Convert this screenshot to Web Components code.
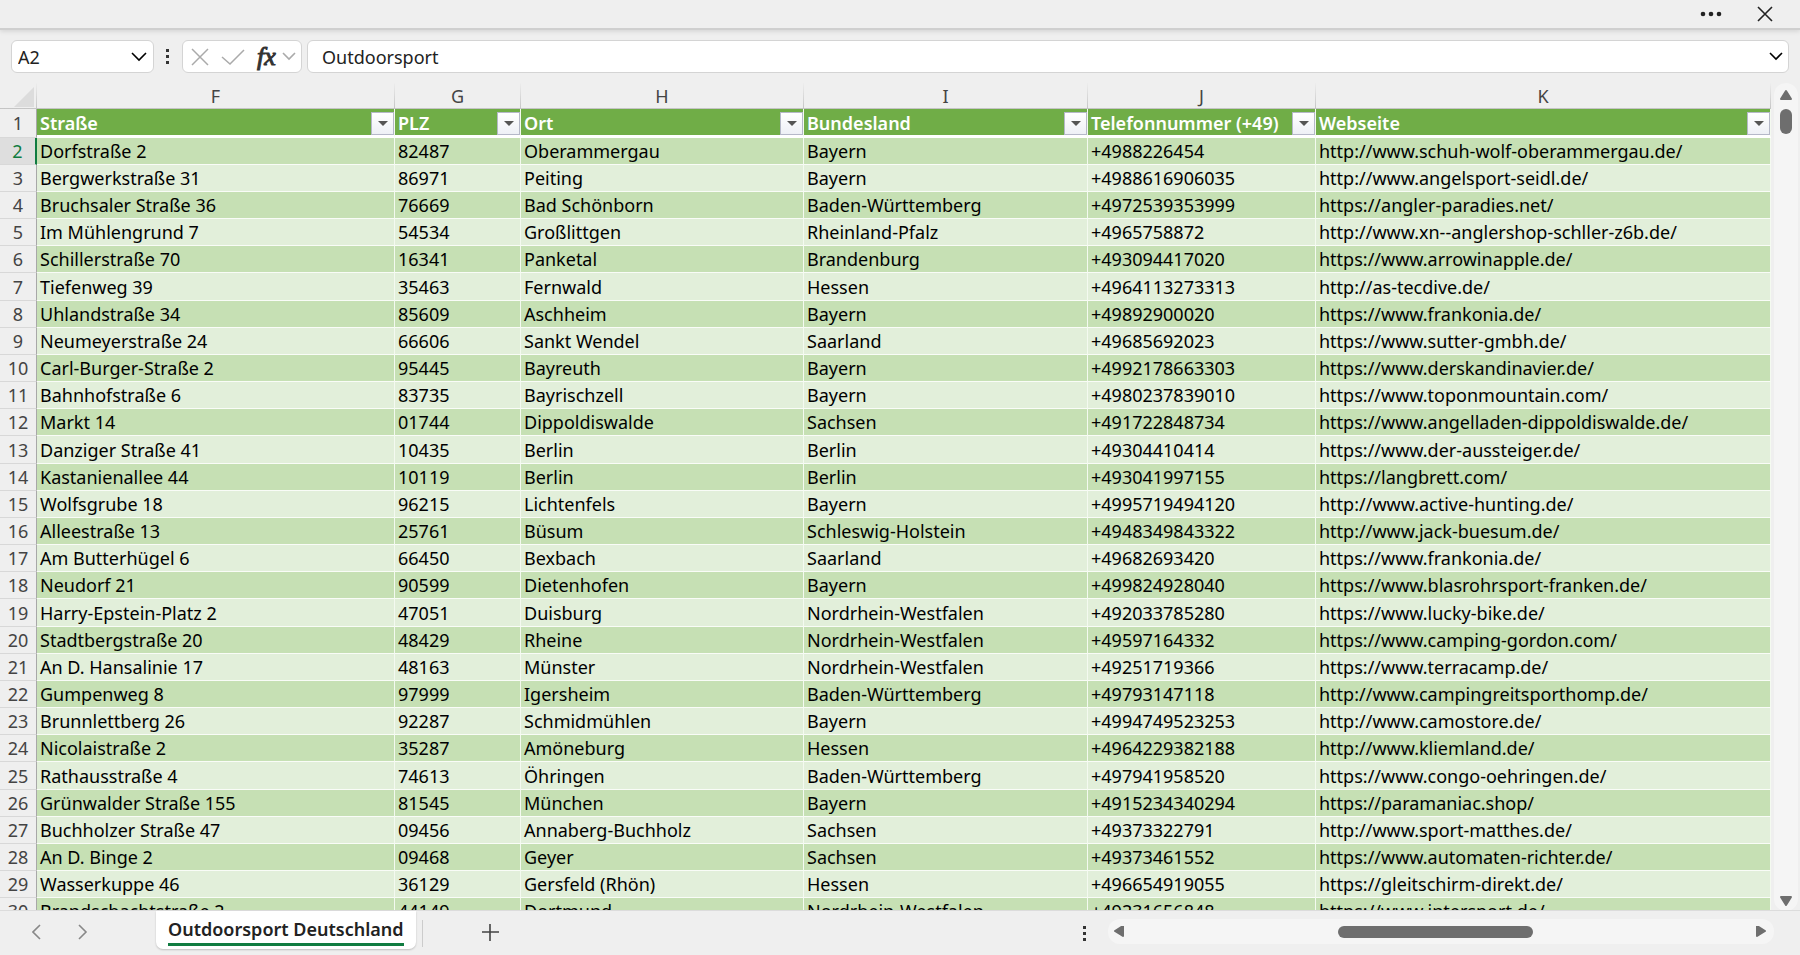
<!DOCTYPE html>
<html lang="de">
<head>
<meta charset="utf-8">
<title>Outdoorsport Deutschland</title>
<style>
  html, body {
    height: 100%;
    margin: 0;
  }
  body {
    background: #efefef;
    color: #000;
    font-family: "Noto Sans", "Open Sans", sans-serif;
    font-size: 18px;
    overflow: hidden;
  }
</style>
</head>
<body>
<sheet-app></sheet-app>

<script>
const columns = [
  ['F', 'Straße'], ['G', 'PLZ'], ['H', 'Ort'],
  ['I', 'Bundesland'], ['J', 'Telefonnummer (+49)'], ['K', 'Webseite']
];

const rows = [
  ['Dorfstraße 2', '82487', 'Oberammergau', 'Bayern', '+4988226454', 'http://www.schuh-wolf-oberammergau.de/'],
  ['Bergwerkstraße 31', '86971', 'Peiting', 'Bayern', '+4988616906035', 'http://www.angelsport-seidl.de/'],
  ['Bruchsaler Straße 36', '76669', 'Bad Schönborn', 'Baden-Württemberg', '+4972539353999', 'https://angler-paradies.net/'],
  ['Im Mühlengrund 7', '54534', 'Großlittgen', 'Rheinland-Pfalz', '+4965758872', 'http://www.xn--anglershop-schller-z6b.de/'],
  ['Schillerstraße 70', '16341', 'Panketal', 'Brandenburg', '+493094417020', 'https://www.arrowinapple.de/'],
  ['Tiefenweg 39', '35463', 'Fernwald', 'Hessen', '+4964113273313', 'http://as-tecdive.de/'],
  ['Uhlandstraße 34', '85609', 'Aschheim', 'Bayern', '+49892900020', 'https://www.frankonia.de/'],
  ['Neumeyerstraße 24', '66606', 'Sankt Wendel', 'Saarland', '+49685692023', 'https://www.sutter-gmbh.de/'],
  ['Carl-Burger-Straße 2', '95445', 'Bayreuth', 'Bayern', '+4992178663303', 'https://www.derskandinavier.de/'],
  ['Bahnhofstraße 6', '83735', 'Bayrischzell', 'Bayern', '+4980237839010', 'https://www.toponmountain.com/'],
  ['Markt 14', '01744', 'Dippoldiswalde', 'Sachsen', '+491722848734', 'https://www.angelladen-dippoldiswalde.de/'],
  ['Danziger Straße 41', '10435', 'Berlin', 'Berlin', '+49304410414', 'https://www.der-aussteiger.de/'],
  ['Kastanienallee 44', '10119', 'Berlin', 'Berlin', '+493041997155', 'https://langbrett.com/'],
  ['Wolfsgrube 18', '96215', 'Lichtenfels', 'Bayern', '+4995719494120', 'http://www.active-hunting.de/'],
  ['Alleestraße 13', '25761', 'Büsum', 'Schleswig-Holstein', '+4948349843322', 'http://www.jack-buesum.de/'],
  ['Am Butterhügel 6', '66450', 'Bexbach', 'Saarland', '+49682693420', 'https://www.frankonia.de/'],
  ['Neudorf 21', '90599', 'Dietenhofen', 'Bayern', '+499824928040', 'https://www.blasrohrsport-franken.de/'],
  ['Harry-Epstein-Platz 2', '47051', 'Duisburg', 'Nordrhein-Westfalen', '+492033785280', 'https://www.lucky-bike.de/'],
  ['Stadtbergstraße 20', '48429', 'Rheine', 'Nordrhein-Westfalen', '+49597164332', 'https://www.camping-gordon.com/'],
  ['An D. Hansalinie 17', '48163', 'Münster', 'Nordrhein-Westfalen', '+49251719366', 'https://www.terracamp.de/'],
  ['Gumpenweg 8', '97999', 'Igersheim', 'Baden-Württemberg', '+49793147118', 'http://www.campingreitsporthomp.de/'],
  ['Brunnlettberg 26', '92287', 'Schmidmühlen', 'Bayern', '+4994749523253', 'http://www.camostore.de/'],
  ['Nicolaistraße 2', '35287', 'Amöneburg', 'Hessen', '+4964229382188', 'http://www.kliemland.de/'],
  ['Rathausstraße 4', '74613', 'Öhringen', 'Baden-Württemberg', '+497941958520', 'https://www.congo-oehringen.de/'],
  ['Grünwalder Straße 155', '81545', 'München', 'Bayern', '+4915234340294', 'https://paramaniac.shop/'],
  ['Buchholzer Straße 47', '09456', 'Annaberg-Buchholz', 'Sachsen', '+49373322791', 'http://www.sport-matthes.de/'],
  ['An D. Binge 2', '09468', 'Geyer', 'Sachsen', '+49373461552', 'https://www.automaten-richter.de/'],
  ['Wasserkuppe 46', '36129', 'Gersfeld (Rhön)', 'Hessen', '+496654919055', 'https://gleitschirm-direkt.de/'],
  ['Brandschachtstraße 2', '44149', 'Dortmund', 'Nordrhein-Westfalen', '+49231656848', 'https://www.intersport.de/']
];

const buttonReset = `
  button {
    display: flex;
    align-items: center;
    justify-content: center;
    padding: 0;
    border: 0;
    background: none;
    color: inherit;
  }
  svg { display: block; fill: none; stroke: currentColor; }
`;

customElements.define('title-strip', class extends HTMLElement {
  constructor() {
    super();
    this.attachShadow({ mode: 'open' }).innerHTML = `
      <style>
        ${buttonReset}
        :host {
          display: flex;
          justify-content: flex-end;
          gap: 22px;
          height: 28px;
          padding-right: 19px;
          border-bottom: 2px solid #cfcfcf;
          box-shadow: 0 1px 5px #0002;
          color: #222;
        }
        button { width: 32px; height: 28px; }
      </style>
      <button aria-label="Weitere Optionen">
        <svg width="24" height="6"><g fill="currentColor" stroke="none"><circle cx="4" cy="3" r="2.3"/><circle cx="12" cy="3" r="2.3"/><circle cx="20" cy="3" r="2.3"/></g></svg>
      </button>
      <button aria-label="Schließen">
        <svg width="16" height="16" stroke-width="1.6"><path d="M1 1l14 14M15 1L1 15"/></svg>
      </button>
    `;
  }
});

customElements.define('formula-bar', class extends HTMLElement {
  constructor() {
    super();
    this.attachShadow({ mode: 'open' }).innerHTML = `
      <style>
        ${buttonReset}
        :host {
          display: flex;
          align-items: center;
          gap: 5px;
          padding: 10px 11px;
        }
        .box {
          display: flex;
          align-items: center;
          box-sizing: border-box;
          height: 33px;
          border: 1px solid #d4d4d4;
          border-radius: 6px;
          background: #fff;
        }
        .name { width: 143px; padding: 0 6px; }
        .tools { width: 120px; gap: 12px; padding: 0 2px 0 8px; color: #aaa; }
        .tools .fx {
          margin-right: -6px;
          color: #333;
          font: italic 26px/28px "Liberation Serif", serif;
          -webkit-text-stroke: 1px #333;
        }
        .formula { flex: 1; padding: 0 5px 0 14px; }
        .grip { width: 18px; }
        input {
          flex: 1;
          min-width: 0;
          padding: 0;
          border: 0;
          outline: 0;
          background: none;
          color: #222;
          font: inherit;
        }
      </style>
      <div class="box name">
        <input aria-label="Namenfeld" value="A2">
        <button aria-label="Namen anzeigen"><svg width="16" height="10" stroke="#333" stroke-width="1.6"><path d="M1 1l7 7 7-7"/></svg></button>
      </div>
      <svg class="grip" height="16" viewBox="0 0 4 16"><path d="M0 0h3v3H0zM0 6h3v3H0zM0 12h3v3H0z" fill="#333" stroke="none"/></svg>
      <div class="box tools">
        <button aria-label="Abbrechen"><svg width="18" height="18" stroke-width="1.5"><path d="M1 1l16 16M17 1L1 17"/></svg></button>
        <button aria-label="Eingeben"><svg width="24" height="18" stroke-width="1.5"><path d="M1 9l8 7L23 2"/></svg></button>
        <button class="fx" aria-label="Funktion einfügen">fx</button>
        <button aria-label="Funktionen"><svg width="14" height="9" stroke-width="1.6"><path d="M1 1l6 6 6-6"/></svg></button>
      </div>
      <div class="box formula">
        <input aria-label="Bearbeitungsleiste" value="Outdoorsport">
        <button aria-label="Erweitern"><svg width="14" height="10" stroke="#333" stroke-width="1.6"><path d="M1 1l6 6 6-6"/></svg></button>
      </div>
    `;
  }
});

customElements.define('filter-head', class extends HTMLElement {
  constructor() {
    super();
    this.attachShadow({ mode: 'open' }).innerHTML = `
      <style>
        ${buttonReset}
        :host {
          display: flex;
          align-items: center;
          justify-content: space-between;
          box-sizing: border-box;
          height: 26px;
          padding-top: 2px;
          white-space: nowrap;
        }
        button {
          box-sizing: border-box;
          width: 23px;
          height: 23px;
          align-self: flex-end;
          border: 1px solid #b5b8c8;
          background: linear-gradient(#fff, #eef0f6);
        }
      </style>
      <slot></slot>
      <button aria-label="Filter"><svg width="10" height="5"><path d="M0 0h10L5 5z" fill="#555" stroke="none"/></svg></button>
    `;
  }
});

customElements.define('data-grid', class extends HTMLElement {
  constructor() {
    super();
    const letters = columns.map(c => `<th scope="col">${c[0]}</th>`).join('');
    const heads = columns.map(c => `<th scope="col"><filter-head>${c[1]}</filter-head></th>`).join('');
    const body = rows.map((row, i) =>
      `<tr><th scope="row">${i + 2}</th>${row.map(cell => `<td>${cell}</td>`).join('')}</tr>`
    ).join('');
    this.attachShadow({ mode: 'open' }).innerHTML = `
      <style>
        :host {
          display: block;
          overflow: hidden;
        }
        table {
          width: 100%;
          table-layout: fixed;
          border-collapse: separate;
          border-spacing: 0;
        }
        .num { width: 37px; }
        .f { width: 358px; }
        .g { width: 126px; }
        .h { width: 283px; }
        .i { width: 284px; }
        .j { width: 228px; }
        th, td {
          box-sizing: border-box;
          height: 27px;
          padding: 0;
          line-height: 24px;
          white-space: nowrap;
          overflow: hidden;
        }
        td {
          padding-left: 3px;
          border-right: 1px solid #f4faf0;
          border-bottom: 1px solid #f9fcf7;
          background: #e2efda;
          text-align: left;
        }
        tbody tr:nth-child(odd) td { background: #c6e0b4; }
        tbody tr:nth-child(6n) > * { height: 28px; }
        .letters th {
          height: 26px;
          border-right: 1px solid;
          border-bottom: 1px solid #b0b0b0;
          color: #444;
          font-weight: 400;
          border-image: linear-gradient(#efefef, #c4c4c4) 1;
        }
        .letters svg { display: block; margin: 3px 2px 0 auto; }
        .heads th[scope=col] {
          height: 29px;
          padding-left: 3px;
          border-right: 1px solid #f4faf0;
          border-bottom: 3px solid #fff;
          background: #70ad47;
          color: #fff;
          font-weight: 600;
          text-align: left;
        }
        th[scope=row] {
          border-right: 1px solid #a8a8a8;
          border-bottom: 1px solid #d8d8d8;
          background: #efefef;
          color: #444;
          font-weight: 400;
          text-align: center;
        }
        tbody tr:first-child th {
          border-right: 2px solid #107c41;
          background: #dedede;
          color: #107c41;
        }
      </style>
      <table>
        <colgroup><col class="num"><col class="f"><col class="g"><col class="h"><col class="i"><col class="j"><col></colgroup>
        <thead>
          <tr class="letters"><th><svg width="20" height="20"><path d="M20 0v20H0z" fill="#dcdcdc"/></svg></th>${letters}</tr>
          <tr class="heads"><th scope="row">1</th>${heads}</tr>
        </thead>
        <tbody>${body}</tbody>
      </table>
    `;
  }
});

customElements.define('scroll-rail', class extends HTMLElement {
  constructor() {
    super();
    this.attachShadow({ mode: 'open' }).innerHTML = `
      <style>
        ${buttonReset}
        :host {
          display: flex;
          flex-direction: column;
          align-items: center;
          box-sizing: border-box;
          border-radius: 12px;
          background: #f5f5f5;
          color: #6e6e6e;
        }
        :host([horizontal]) { flex-direction: row; }
        .track { flex: 1; display: flex; flex-direction: inherit; }
        .before { flex: var(--before, 0); }
        .after { flex: var(--after, 1); }
        .thumb { width: 12px; height: 25px; border-radius: 6px; background: #6e6e6e; }
        :host([horizontal]) .thumb { width: auto; height: 12px; flex: var(--size, 1); }
        button { width: 14px; height: 12px; }
        :host([horizontal]) button { width: 12px; height: 14px; }
        :host([horizontal]) svg { transform: rotate(-90deg); }
      </style>
      <button aria-label="Zurück"><svg width="14" height="12"><path d="M7 2L12 10H2z" fill="currentColor" stroke-width="2" stroke-linejoin="round"/></svg></button>
      <div class="track"><div class="before"></div><div class="thumb"></div><div class="after"></div></div>
      <button aria-label="Weiter"><svg width="14" height="12"><path d="M7 10L12 2H2z" fill="currentColor" stroke-width="2" stroke-linejoin="round"/></svg></button>
    `;
  }
});

customElements.define('sheet-tabs', class extends HTMLElement {
  constructor() {
    super();
    this.attachShadow({ mode: 'open' }).innerHTML = `
      <style>
        ${buttonReset}
        :host {
          display: flex;
          align-items: flex-start;
          height: 44px;
          box-shadow: 0 -1px #dcdcdc;
          color: #888;
        }
        .arrow { width: 46px; height: 42px; }
        nav { display: flex; padding: 0 50px 0 14px; }
        .tab {
          height: 38px;
          padding: 0 12px;
          border-radius: 0 0 7px 7px;
          background: #fff;
          box-shadow: 0 1px 2px #0003;
          color: #222;
          font: 600 18px "Noto Sans", "Open Sans", sans-serif;
        }
        .tab span { border-bottom: 3px solid #107c41; line-height: 28px; }
        .rule { width: 1px; height: 27px; margin: 9px 0 0 6px; background: #ccc; }
        .add { width: 24px; height: 42px; margin-left: 56px; color: #444; }
        .grip { margin: 15px 0 0 auto; }
        scroll-rail {
          width: 37%;
          height: 25px;
          margin: 8px 26px 0 21px;
          padding: 0 7px 0 5px;
          --before: 214;
          --size: 195;
          --after: 223;
        }
      </style>
      <nav>
        <button class="arrow" aria-label="Vorheriges Blatt"><svg width="10" height="16" stroke-width="1.6"><path d="M8 1L1 8l7 7"/></svg></button>
        <button class="arrow" aria-label="Nächstes Blatt"><svg width="10" height="16" stroke-width="1.6"><path d="M1 1l7 7-7 7"/></svg></button>
      </nav>
      <button class="tab"><span><slot></slot></span></button>
      <div class="rule"></div>
      <button class="add" aria-label="Neues Blatt"><svg width="17" height="17" stroke-width="1.6"><path d="M8 0v17M0 8h17"/></svg></button>
      <svg class="grip" width="4" height="16"><path d="M0 0h3v3H0zM0 6h3v3H0zM0 12h3v3H0z" fill="#333" stroke="none"/></svg>
      <scroll-rail horizontal></scroll-rail>
    `;
  }
});

customElements.define('sheet-app', class extends HTMLElement {
  constructor() {
    super();
    this.attachShadow({ mode: 'open' }).innerHTML = `
      <style>
        :host {
          display: flex;
          flex-direction: column;
          height: 100%;
        }
        main { flex: 1; min-height: 0; display: flex; }
        data-grid { flex: 1; }
        main scroll-rail { width: 24px; margin: 0 2px 0 3px; padding: 6px 0 4px; gap: 8px; }
      </style>
      <title-strip></title-strip>
      <formula-bar></formula-bar>
      <main>
        <data-grid></data-grid>
        <scroll-rail></scroll-rail>
      </main>
      <sheet-tabs>Outdoorsport Deutschland</sheet-tabs>
    `;
  }
});
</script>
</body>
</html>
